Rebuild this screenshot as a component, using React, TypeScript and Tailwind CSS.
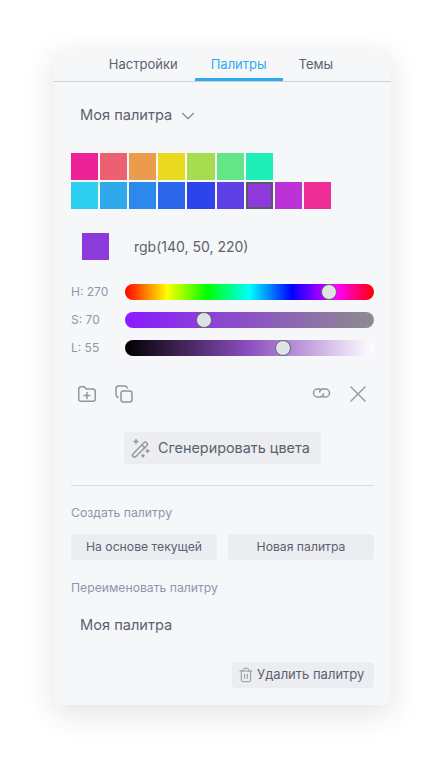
import { ChevronDown, Trash2 } from "lucide-react";

const ROW_1 = ["#ec2296", "#ec6070", "#ea9b4b", "#e9da20", "#a8dc50", "#64e688", "#20eeb8"];
const ROW_2 = ["#2ecfee", "#2eaaec", "#2d88ec", "#2c66ea", "#2c44ea", "#5c40e6", "#8f38dc", "#bb32d6", "#ee2e96"];

function Swatch({ color, active }: { color: string; active?: boolean }) {
  return (
    <div
      className={active ? "w-[27.11px] h-[27px] border-[2px] border-[#545b66]" : "w-[27.11px] h-[27px]"}
      style={{ backgroundColor: color }}
    />
  );
}

function Slider({ label, thumb, track }: { label: string; thumb: number; track: string }) {
  return (
    <div className="flex items-center h-4">
      <span className="w-[54px] text-xs text-[#8f96ab]">{label}</span>
      <div className={`relative flex-1 h-4 rounded-lg ${track}`}>
        <div
          className="absolute top-[0px] w-4 h-4 -ml-2 rounded-full bg-[#e0e2e6] border border-[#5f6670]"
          style={{ left: thumb }}
        />
      </div>
    </div>
  );
}

function FolderAdd() {
  return (
    <svg width="18" height="16" viewBox="0.5 1.5 18 16" fill="none" stroke="currentColor" strokeWidth="1.5" strokeLinejoin="round" strokeLinecap="round">
      <path d="M1.250 4.500C1.250 3 2.250 2.250 3.500 2.250h3.200l2 2.250h6.800c1.400 0 2.250 1 2.250 2.500v7.500c0 1.400-1 2.250-2.250 2.250h-12c-1.400 0-2.250-1-2.250-2.250z" />
      <path d="M9.500 8v6M6.500 11h6" />
    </svg>
  );
}

function CopyIcon() {
  return (
    <svg width="18" height="18" viewBox="0 0 18 18" fill="none" stroke="currentColor" strokeWidth="1.5" strokeLinecap="round" strokeLinejoin="round">
      <rect x="6" y="6" width="11" height="11" rx="2.500" />
      <path d="M3 12.500C2 12 1 11 1 9.500V3.500C1 2 2 1 3.500 1h6C11 1 12 2 12.500 3" />
    </svg>
  );
}

function ChainIcon() {
  return (
    <svg width="19" height="12" viewBox="0 0 19 12" fill="none" stroke="currentColor" strokeWidth="1.5" strokeLinecap="round" className="-mt-[2px]">
      <path d="M8 2H5.500a4 4 0 0 0 0 8H8a4 4 0 0 0 3.500-3" />
      <path d="M11 10h2.500a4 4 0 0 0 0-8H11a4 4 0 0 0-3.500 3" />
    </svg>
  );
}

function CloseIcon() {
  return (
    <svg width="16" height="16" viewBox="0 0 16 16" fill="none" stroke="currentColor" strokeWidth="1.4" strokeLinecap="round">
      <path d="M1 1l14 14M15 1 1 15" />
    </svg>
  );
}

function MagicWand() {
  return (
    <svg width="20" height="20" viewBox="0 0 20 20" fill="none" stroke="currentColor" strokeWidth="1.4" strokeLinecap="round" strokeLinejoin="round">
      <path d="M1.800 16.200 13.200 4.400c.6-.6 1.500-.6 2.100 0l.8.800c.6.6.6 1.500 0 2.100L4.700 18.800c-.6.6-1.500.6-2.100 0l-.8-.7c-.6-.5-.6-1.400 0-1.900z" />
      <path d="m11 7 3 3" />
      <path d="M5 1.500v4M3 3.500h4M16.500 11.500v3M15 13h3M12 16.500v2.500M10.800 17.700h2.400" />
    </svg>
  );
}

export default function App() {
  return (
    <div className="w-[445px] h-[763px] pt-[50px] bg-white font-['Inter',sans-serif] overflow-hidden">
      <div className="ml-[54px] w-[337px] h-[655px] bg-[#f6f7f9] rounded-lg shadow-[0_8px_30px_rgba(40,50,70,0.14)]">
        {/* Tabs */}
        <div className="flex justify-center h-[32px] pr-[4px] border-b border-[#cdd0d4]">
          <div className="px-[17px] pt-[5px] text-[13px] text-[#5a6270]">Настройки</div>
          <div className="px-[16px] pt-[5px] h-[31px] text-[13px] text-[#2eabf0] border-b-[3px] border-[#2eabf0]">Палитры</div>
          <div className="px-[16px] pt-[5px] text-[13px] text-[#5a6270]">Темы</div>
        </div>

        <div className="px-[17px]">
          <div className="flex items-center gap-[5px] h-5 mt-[24px] pl-[9px] text-[14.6px] text-[#5a6270]">
            Моя палитра
            <ChevronDown size={22} strokeWidth={1.25} className="text-[#7d8592]" />
          </div>

          <div className="flex gap-[2px] mt-[27px]">
            {ROW_1.map((c) => (
              <Swatch key={c} color={c} />
            ))}
          </div>
          <div className="flex gap-[2px] mt-[2px]">
            {ROW_2.map((c, i) => (
              <Swatch key={c} color={c} active={i === 6} />
            ))}
          </div>

          <div className="flex items-center mt-[24px] pl-[11px]">
            <div className="w-[27px] h-[27px] bg-[#8c3adc]" />
            <span className="ml-[25px] text-sm text-[#5a6270]">rgb(140, 50, 220)</span>
          </div>

          <div className="flex flex-col gap-[12px] mt-[24px]">
            <Slider
              label="H: 270"
              thumb={204}
              track="bg-[linear-gradient(to_right,#ff0000,#ffff00_17%,#00ff00_33%,#00ffff_50%,#0000ff_67%,#ff00ff_85%,#ff0000)]"
            />
            <Slider
              label="S: 70"
              thumb={79}
              track="bg-[linear-gradient(to_right,#8c1aff,#8c8c8c)]"
            />
            <Slider
              label="L: 55"
              thumb={158}
              track="bg-[linear-gradient(to_right,#000000,#8c4fc0_50%,#ffffff)]"
            />
          </div>

          <div className="flex items-center justify-between mt-[28px] pl-[7px] pr-[8px] h-5 text-[#8f96a3]">
            <div className="flex items-center gap-[19px]">
              <FolderAdd />
              <CopyIcon />
            </div>
            <div className="flex items-center gap-[19px]">
              <ChainIcon />
              <CloseIcon />
            </div>
          </div>

          <div className="flex justify-center mt-[28px]">
            <button className="flex items-center gap-[7px] w-[197px] h-[32px] pl-[7px] rounded-sm bg-[#ecedf0] text-[14.4px] text-[#5a6270]">
              <span className="text-[#8f96a3]">
                <MagicWand />
              </span>
              Сгенерировать цвета
            </button>
          </div>

          <div className="h-px bg-[#d8dadd] mt-[21px]" />

          <div className="mt-[19px] text-[12.2px] leading-[15px] text-[#8f96ab]">Создать палитру</div>
          <div className="grid grid-cols-2 gap-[11px] mt-[14px]">
            <button className="h-[26px] rounded-sm bg-[#ecedf0] text-[12.2px] text-[#5a6270]">На основе текущей</button>
            <button className="h-[26px] rounded-sm bg-[#ecedf0] text-[12.2px] text-[#5a6270]">Новая палитра</button>
          </div>

          <div className="mt-[20px] text-[12.2px] leading-[15px] text-[#8f96ab]">Переименовать палитру</div>
          <div className="mt-[20px] pl-[9px] text-[14.6px] leading-5 text-[#5a6270]">Моя палитра</div>

          <div className="flex justify-end mt-[27px]">
            <button className="flex items-center gap-[3px] w-[142px] h-[26px] pl-[6px] rounded-sm bg-[#ecedf0] text-[13px] text-[#5a6270]">
              <Trash2 size={16} strokeWidth={1.5} className="text-[#8f96a3]" />
              Удалить палитру
            </button>
          </div>
        </div>
      </div>
    </div>
  );
}
